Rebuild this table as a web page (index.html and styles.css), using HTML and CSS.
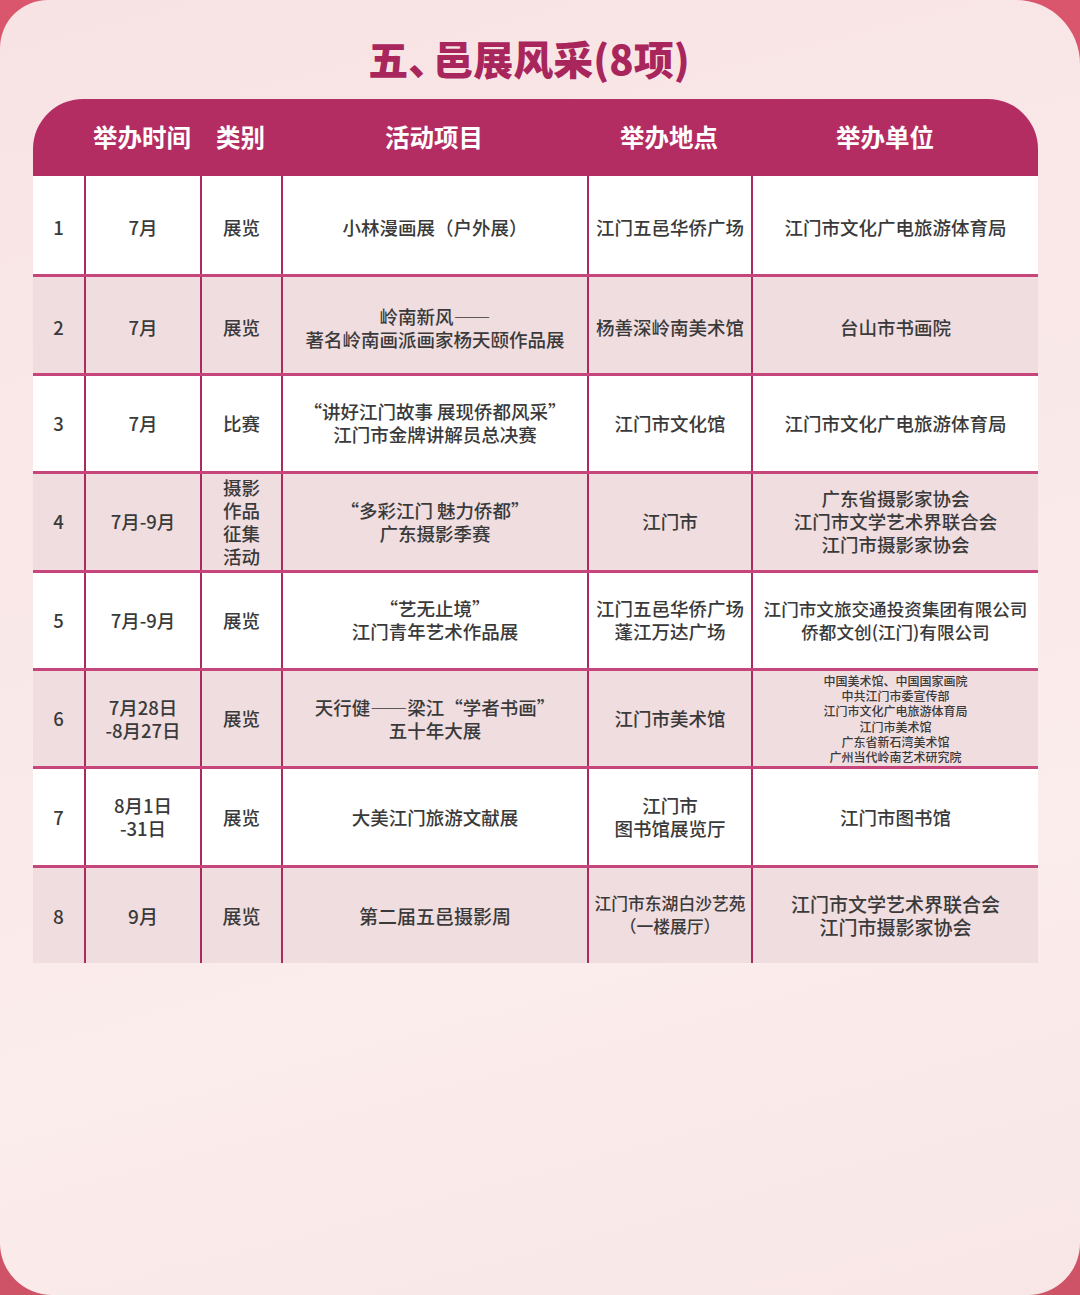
FILE: index.html
```html
<!DOCTYPE html>
<html lang="zh-CN">
<head>
<meta charset="utf-8">
<title>五、邑展风采(8项)</title>
<link rel="stylesheet" href="styles.css">
</head>
<body>
<div class="page">
  <div class="card">
    <h1 class="title">五<span class="dun">、</span>邑展风采(8项)</h1>
    <div class="table">
      <div class="row head">
        <div class="cell"></div>
        <div class="cell">举办时间</div>
        <div class="cell">类别</div>
        <div class="cell">活动项目</div>
        <div class="cell">举办地点</div>
        <div class="cell unit">举办单位</div>
      </div>
      <div class="row low">
        <div class="cell">1</div>
        <div class="cell">7月</div>
        <div class="cell">展览</div>
        <div class="cell">小林漫画展（户外展）</div>
        <div class="cell">江门五邑华侨广场</div>
        <div class="cell">江门市文化广电旅游体育局</div>
      </div>
      <div class="row alt low">
        <div class="cell">2</div>
        <div class="cell">7月</div>
        <div class="cell">展览</div>
        <div class="cell">岭南新风——<br>著名岭南画派画家杨天颐作品展</div>
        <div class="cell">杨善深岭南美术馆</div>
        <div class="cell">台山市书画院</div>
      </div>
      <div class="row">
        <div class="cell">3</div>
        <div class="cell">7月</div>
        <div class="cell">比赛</div>
        <div class="cell">“讲好江门故事 展现侨都风采”<br>江门市金牌讲解员总决赛</div>
        <div class="cell">江门市文化馆</div>
        <div class="cell">江门市文化广电旅游体育局</div>
      </div>
      <div class="row alt">
        <div class="cell">4</div>
        <div class="cell">7月-9月</div>
        <div class="cell">摄影<br>作品<br>征集<br>活动</div>
        <div class="cell">“多彩江门 魅力侨都”<br>广东摄影季赛</div>
        <div class="cell">江门市</div>
        <div class="cell">广东省摄影家协会<br>江门市文学艺术界联合会<br>江门市摄影家协会</div>
      </div>
      <div class="row">
        <div class="cell">5</div>
        <div class="cell">7月-9月</div>
        <div class="cell">展览</div>
        <div class="cell">“艺无止境”<br>江门青年艺术作品展</div>
        <div class="cell">江门五邑华侨广场<br>蓬江万达广场</div>
        <div class="cell narrow">江门市文旅交通投资集团有限公司<br>侨都文创(江门)有限公司</div>
      </div>
      <div class="row alt">
        <div class="cell">6</div>
        <div class="cell">7月28日<br>-8月27日</div>
        <div class="cell">展览</div>
        <div class="cell">天行健——梁江“学者书画”<br>五十年大展</div>
        <div class="cell">江门市美术馆</div>
        <div class="cell small">中国美术馆、中国国家画院<br>中共江门市委宣传部<br>江门市文化广电旅游体育局<br>江门市美术馆<br>广东省新石湾美术馆<br>广州当代岭南艺术研究院</div>
      </div>
      <div class="row">
        <div class="cell">7</div>
        <div class="cell">8月1日<br>-31日</div>
        <div class="cell">展览</div>
        <div class="cell">大美江门旅游文献展</div>
        <div class="cell">江门市<br>图书馆展览厅</div>
        <div class="cell">江门市图书馆</div>
      </div>
      <div class="row alt last">
        <div class="cell">8</div>
        <div class="cell">9月</div>
        <div class="cell">展览</div>
        <div class="cell">第二届五邑摄影周</div>
        <div class="cell cond">江门市东湖白沙艺苑<br>（一楼展厅）</div>
        <div class="cell">江门市文学艺术界联合会<br>江门市摄影家协会</div>
      </div>
    </div>
  </div>
</div>
</body>
</html>
```

FILE: styles.css
```css
html, body {
  margin: 0;
  padding: 0;
}
body {
  background: linear-gradient(180deg, #d9566c 0%, #cf5367 100%);
  font-family: "Noto Sans CJK SC", "Noto Sans", sans-serif;
  width: 1080px;
  height: 1295px;
  overflow: hidden;
}
.page {
  width: 1080px;
  height: 1295px;
}
.card {
  width: 1080px;
  height: 1295px;
  box-sizing: border-box;
  border-radius: 48px 64px 52px 52px;
  background: linear-gradient(165deg, #f8e3e4 0%, #fae9e9 45%, #fbedec 70%, #f8e6e6 100%);
  padding: 34px 42px 0 33px;
}
.title {
  margin: 0 0 17px 0;
  padding-right: 13px;
  text-align: center;
  font-size: 40px;
  line-height: 48px;
  font-weight: 900;
  color: #a9265d;
}
.title .dun {
  letter-spacing: -15px;
}
.table {
  width: 1005px;
}
.row {
  display: grid;
  grid-template-columns: 51px 116px 81px 306px 164px 287px;
  height: 98.4px;
  box-sizing: border-box;
  background: #ffffff;
  color: #3a3a3a;
  font-size: 18.5px;
  line-height: 23px;
  font-weight: 500;
}
.row + .row {
  border-top: 3px solid #c6457a;
}
.row.head + .row {
  border-top: none;
}
.row.alt {
  background: #f0dde0;
}
.cell {
  display: flex;
  align-items: center;
  justify-content: center;
  text-align: center;
  white-space: nowrap;
}
.row .cell + .cell {
  border-left: 2px solid #ab2a60;
}
.row.low .cell {
  padding-top: 5px;
}
.row.head {
  height: 77px;
  background: #b42d62;
  color: #ffffff;
  border-radius: 50px 50px 0 0;
  font-size: 24.5px;
  font-weight: 700;
  line-height: 30px;
}
.row.head .cell + .cell {
  border-left: none;
}
.row.head .cell {
  padding-bottom: 2px;
}
.row.head .cell.unit {
  padding-right: 19px;
}
.cell.narrow {
  font-size: 17.6px;
}
.cell.small {
  font-size: 12px;
  line-height: 15.2px;
}
.cell.cond {
  font-size: 16.8px;
}
.row.last {
  font-size: 19px;
}
.row.last .cell.cond {
  font-size: 16.8px;
}
```
